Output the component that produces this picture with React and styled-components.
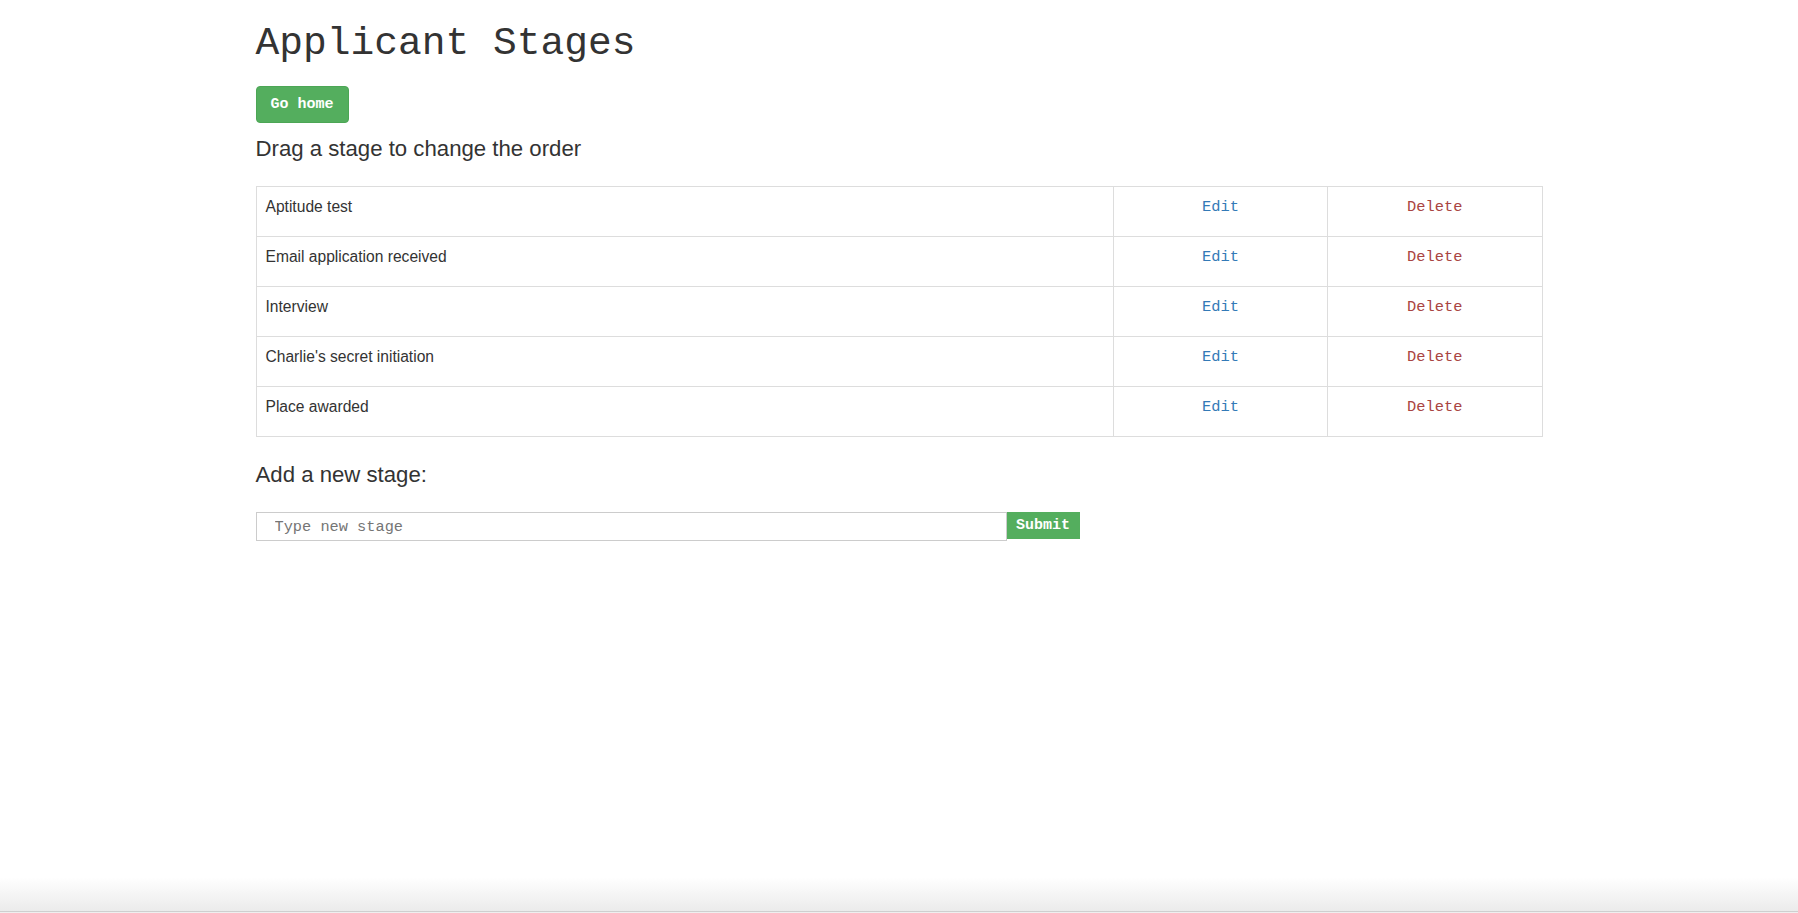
import React from 'react';
import styled, { createGlobalStyle } from 'styled-components';

const GlobalStyle = createGlobalStyle`
  html, body {
    margin: 0;
    padding: 0;
    background: #fff;
  }

  body {
    font-family: 'Liberation Sans', Arial, sans-serif;
    font-size: 15.6px;
    color: #333;
  }

  * {
    box-sizing: border-box;
  }
`;

const mono = `'Liberation Mono', 'Courier New', monospace`;

const Page = styled.div`
  min-height: 100vh;
  display: flex;
  flex-direction: column;
`;

const Main = styled.main`
  flex: 1;
  width: 1287px;
  margin: 0 auto;
  padding-bottom: 20px;
`;

const Title = styled.h1`
  font-family: ${mono};
  font-size: 39.6px;
  font-weight: 400;
  line-height: 44px;
  color: #333;
  margin: 22px 0 20px;
`;

const HomeButton = styled.button`
  font-family: ${mono};
  font-size: 15px;
  font-weight: 700;
  line-height: 21px;
  color: #fff;
  background-color: #54ae5e;
  border: 1px solid #4ca655;
  border-radius: 4px;
  padding: 7px 14px;
  cursor: pointer;
`;

const SubHeading = styled.h3`
  font-size: 22.2px;
  font-weight: 400;
  line-height: 24px;
  color: #333;
  margin: ${({ $top }) => $top}px 0 ${({ $bottom }) => $bottom}px;
`;

const StageTable = styled.table`
  width: 100%;
  border-collapse: collapse;
  table-layout: fixed;
  border: 1px solid #ddd;
`;

const Row = styled.tr`
  height: 50px;
  cursor: move;
`;

const NameCell = styled.td`
  width: 66.67%;
  border: 1px solid #ddd;
  padding: 9px 9px 8px;
  vertical-align: top;
  line-height: 22px;
`;

const ActionCell = styled.td`
  width: 16.67%;
  border: 1px solid #ddd;
  padding: 8px;
  text-align: center;
  vertical-align: top;
  line-height: 22px;
`;

const ActionLink = styled.a`
  font-family: ${mono};
  font-size: 15.4px;
  color: ${({ $danger }) => ($danger ? '#a94442' : '#337ab7')};
  text-decoration: none;
  cursor: pointer;
`;

const AddForm = styled.form`
  display: flex;
  align-items: flex-start;
  width: 825px;
`;

const StageInput = styled.input`
  width: 751px;
  height: 29px;
  border: 1px solid #ccc;
  padding: 0 18px;
  font-family: ${mono};
  font-size: 15.3px;
  color: #333;
  outline: none;

  &::placeholder {
    color: #757575;
  }
`;

const SubmitButton = styled.button`
  width: 73px;
  height: 27px;
  border: none;
  padding: 0 9px;
  background-color: #54ae5e;
  color: #fff;
  font-family: ${mono};
  font-size: 15px;
  font-weight: 700;
  cursor: pointer;
`;

const BottomBar = styled.footer`
  height: 36px;
  background: linear-gradient(
    to bottom,
    #ffffff 0,
    #ebebeb 34px,
    #cfcfcf 34px,
    #cfcfcf 35px,
    #efefef 35px
  );
`;

const stages = [
  'Aptitude test',
  'Email application received',
  'Interview',
  "Charlie's secret initiation",
  'Place awarded',
];

const App = () => {
  return (
    <Page>
      <GlobalStyle />
      <Main>
        <Title>Applicant Stages</Title>
        <HomeButton type="button">Go home</HomeButton>
        <SubHeading $top={14} $bottom={25}>
          Drag a stage to change the order
        </SubHeading>
        <StageTable>
          <tbody>
            {stages.map((stage) => (
              <Row key={stage}>
                <NameCell>{stage}</NameCell>
                <ActionCell>
                  <ActionLink>Edit</ActionLink>
                </ActionCell>
                <ActionCell>
                  <ActionLink $danger>Delete</ActionLink>
                </ActionCell>
              </Row>
            ))}
          </tbody>
        </StageTable>
        <SubHeading $top={26} $bottom={25}>
          Add a new stage:
        </SubHeading>
        <AddForm onSubmit={(e) => e.preventDefault()}>
          <StageInput placeholder="Type new stage" />
          <SubmitButton type="submit">Submit</SubmitButton>
        </AddForm>
      </Main>
      <BottomBar />
    </Page>
  );
};

export default App;
